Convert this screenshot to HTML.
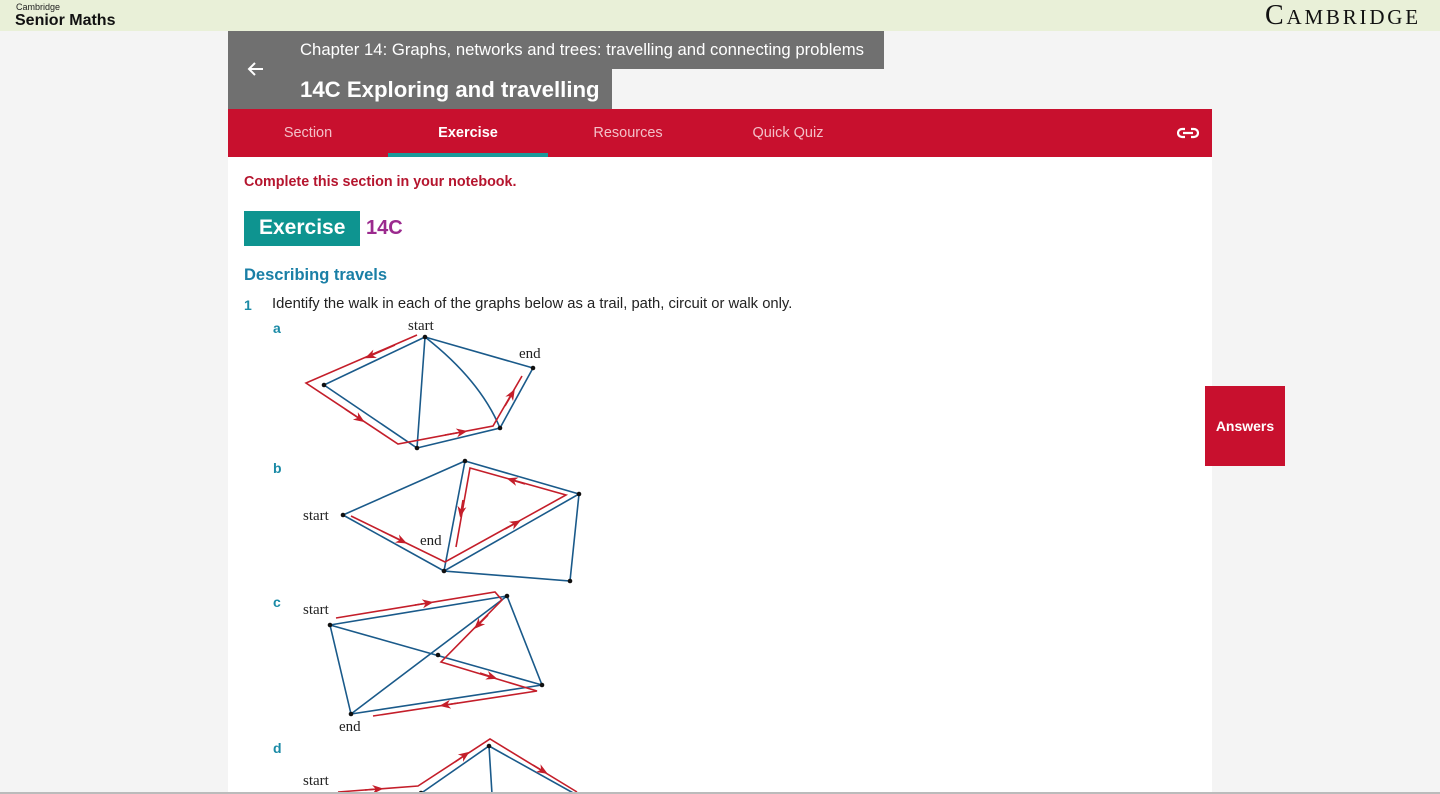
<!DOCTYPE html>
<html><head><meta charset="utf-8"><style>
*{margin:0;padding:0;box-sizing:border-box}
body{width:1440px;height:794px;overflow:hidden;background:#f4f4f4;font-family:"Liberation Sans",sans-serif;position:relative}
.hdr{position:absolute;left:0;top:0;width:1440px;height:31px;background:#e9f0d8}
.a{position:absolute;white-space:nowrap}
.os{font-family:"Liberation Sans",sans-serif}
</style></head><body>
<div class="hdr"></div>
<div class="a" style="left:16px;top:2px;font-size:9px;color:#222">Cambridge</div>
<div class="a" style="left:15px;top:12px;font-size:16px;font-weight:bold;color:#111">Senior Maths</div>
<div class="a" style="left:1265px;top:0px;font-family:'Liberation Serif',serif;font-size:28px;color:#111;letter-spacing:2.8px">C<span style="font-size:21px">AMBRIDGE</span></div>

<div class="a" style="left:228px;top:31px;width:656px;height:38px;background:#707070"></div>
<div class="a" style="left:228px;top:69px;width:384px;height:40px;background:#707070"></div>
<svg class="a" style="left:247px;top:61px" width="18" height="16" viewBox="0 0 18 16"><path d="M16 8H2M8 2L2 8L8 14" stroke="#fff" stroke-width="2" fill="none"/></svg>
<div class="a os" style="left:300px;top:40px;color:#fff;font-size:16.7px">Chapter 14: Graphs, networks and trees: travelling and connecting problems</div>
<div class="a os" style="left:300px;top:77px;color:#fff;font-size:22.2px;font-weight:bold">14C Exploring and travelling</div>

<div class="a" style="left:228px;top:109px;width:984px;height:48px;background:#c8102e"></div>
<div class="a os" style="left:228px;top:125px;width:160px;text-align:center;color:#f3c0c8;font-size:14.5px">Section</div>
<div class="a os" style="left:388px;top:125px;width:160px;text-align:center;color:#fff;font-size:14.5px;font-weight:bold">Exercise</div>
<div class="a" style="left:388px;top:153px;width:160px;height:4px;background:#1a9a9a"></div>
<div class="a os" style="left:548px;top:125px;width:160px;text-align:center;color:#f3c0c8;font-size:14.5px">Resources</div>
<div class="a os" style="left:708px;top:125px;width:160px;text-align:center;color:#f3c0c8;font-size:14.5px">Quick Quiz</div>
<svg class="a" style="left:1177px;top:125px" width="22" height="16" viewBox="0 0 22 16"><path d="M8 4H5a4 4 0 0 0 0 8h3M14 4h3a4 4 0 0 1 0 8h-3M6 8h10" stroke="#fff" stroke-width="2.2" fill="none"/></svg>

<div class="a" style="left:228px;top:157px;width:984px;height:637px;background:#fff"></div>
<div class="a os" style="left:244px;top:174px;color:#b5152e;font-size:14.3px;font-weight:bold">Complete this section in your notebook.</div>
<div class="a" style="left:244px;top:211px;width:116px;height:35px;background:#0e9490"></div>
<div class="a os" style="left:259px;top:216px;color:#fff;font-size:21px;font-weight:bold">Exercise</div>
<div class="a os" style="left:366px;top:217px;color:#9b2a8e;font-size:20px;font-weight:bold">14C</div>
<div class="a os" style="left:244px;top:266px;color:#1a7fa6;font-size:16.5px;font-weight:bold">Describing travels</div>
<div class="a os" style="left:244px;top:297px;color:#1a8aa6;font-size:14px;font-weight:bold">1</div>
<div class="a os" style="left:272px;top:296px;color:#222;font-size:14.8px">Identify the walk in each of the graphs below as a trail, path, circuit or walk only.</div>
<div class="a os" style="left:273px;top:320px;color:#1a8aa6;font-size:14px;font-weight:bold">a</div>
<div class="a os" style="left:273px;top:460px;color:#1a8aa6;font-size:14px;font-weight:bold">b</div>
<div class="a os" style="left:273px;top:594px;color:#1a8aa6;font-size:14px;font-weight:bold">c</div>
<div class="a os" style="left:273px;top:740px;color:#1a8aa6;font-size:14px;font-weight:bold">d</div>

<svg class="a" style="left:0;top:0" width="1440" height="794">
<defs><marker id="ar" viewBox="0 0 10 10" refX="5" refY="5" markerWidth="7" markerHeight="7" orient="auto"><path d="M0 1L10 5L0 9L3 5Z" fill="#c41e2a"/></marker></defs>
<g font-family="Liberation Serif,serif" font-size="15" fill="#222">
<text x="408" y="330">start</text><text x="519" y="358">end</text>
<text x="303" y="520">start</text><text x="420" y="545">end</text>
<text x="303" y="614">start</text><text x="339" y="731">end</text>
<text x="303" y="785">start</text></g>
<g stroke="#1a5a8a" stroke-width="1.6" fill="none">
<path d="M425 337L324 385L417 448L425 337L533 368L500 428L417 448M425 337Q480 380 500 428"/>
<path d="M343 515L465 461L444 571L343 515M465 461L579 494L444 571L570 581L579 494"/>
<path d="M330 625L507 596L542 685L351 714L330 625M330 625L542 685M507 596L351 714"/>
<path d="M420 794L489 746L575 794M489 746L492 794"/>
</g>
<g stroke="#c41e2a" stroke-width="1.6" fill="none">
<path d="M417 335L306 383L398 444L493 426L522 376"/>
<path d="M351 516L445 562L566 495L470 468L456 547"/>
<path d="M336 618L495 592L502 600L441 662L537 691L373 716"/>
<path d="M338 792L418 786L490 739L577 792"/>
</g>
<g stroke-width="1.6" fill="none">
<path d="M395 345L370 356" marker-end="url(#ar)" stroke="#c41e2a"/>
<path d="M345 409L360 419" marker-end="url(#ar)" stroke="#c41e2a"/>
<path d="M445 435L462 432" marker-end="url(#ar)" stroke="#c41e2a"/>
<path d="M505 406L512 394" marker-end="url(#ar)" stroke="#c41e2a"/>
<path d="M390 535L402 541" marker-end="url(#ar)" stroke="#c41e2a"/>
<path d="M505 529L516 523" marker-end="url(#ar)" stroke="#c41e2a"/>
<path d="M525 484L512 480" marker-end="url(#ar)" stroke="#c41e2a"/>
<path d="M463 500L461 512" marker-end="url(#ar)" stroke="#c41e2a"/>
<path d="M415 605L428 603" marker-end="url(#ar)" stroke="#c41e2a"/>
<path d="M488 615L478 625" marker-end="url(#ar)" stroke="#c41e2a"/>
<path d="M480 673L492 677" marker-end="url(#ar)" stroke="#c41e2a"/>
<path d="M458 703L445 705" marker-end="url(#ar)" stroke="#c41e2a"/>
<path d="M365 790L378 789" marker-end="url(#ar)" stroke="#c41e2a"/>
<path d="M455 762L465 755" marker-end="url(#ar)" stroke="#c41e2a"/>
<path d="M533 765L543 771" marker-end="url(#ar)" stroke="#c41e2a"/>
</g>
<g fill="#111">
<circle cx="425" cy="337" r="2.3"/><circle cx="324" cy="385" r="2.3"/><circle cx="417" cy="448" r="2.3"/><circle cx="500" cy="428" r="2.3"/><circle cx="533" cy="368" r="2.3"/>
<circle cx="343" cy="515" r="2.3"/><circle cx="465" cy="461" r="2.3"/><circle cx="579" cy="494" r="2.3"/><circle cx="444" cy="571" r="2.3"/><circle cx="570" cy="581" r="2.3"/>
<circle cx="330" cy="625" r="2.3"/><circle cx="507" cy="596" r="2.3"/><circle cx="438" cy="655" r="2.3"/><circle cx="542" cy="685" r="2.3"/><circle cx="351" cy="714" r="2.3"/>
<circle cx="489" cy="746" r="2.3"/><circle cx="421" cy="793" r="2.3"/>
</g>
</svg>

<div class="a" style="left:1205px;top:386px;width:80px;height:80px;background:#c8102e"></div>
<div class="a os" style="left:1205px;top:418px;width:80px;text-align:center;color:#fff;font-size:14px;font-weight:bold">Answers</div>
<div class="a" style="left:0;top:792px;width:1440px;height:2px;background:#bbb"></div>
</body></html>
